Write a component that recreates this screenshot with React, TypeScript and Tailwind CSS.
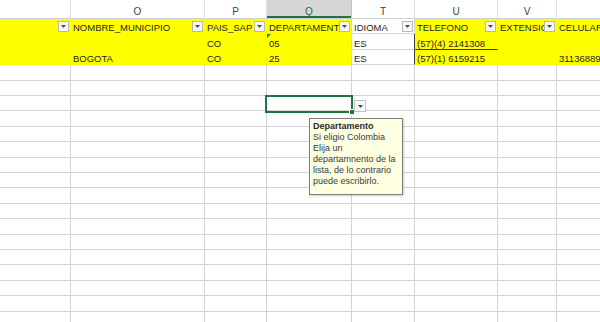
const font = { fontFamily: '"Liberation Sans", Arial, sans-serif' }

type Col = { letter: string; w: string }

const cols: Col[] = [
  { letter: '', w: 'w-[71px]' },
  { letter: 'O', w: 'w-[134px]' },
  { letter: 'P', w: 'w-[62px]' },
  { letter: 'Q', w: 'w-[85px]' },
  { letter: 'T', w: 'w-[63px]' },
  { letter: 'U', w: 'w-[83px]' },
  { letter: 'V', w: 'w-[59px]' },
  { letter: '', w: 'w-[60px]' },
]

const rowHeights = [
  'h-[15px]', 'h-[16px]', 'h-[15px]', 'h-[16px]', 'h-[15px]', 'h-[15px]', 'h-[16px]',
  'h-[15px]', 'h-[16px]', 'h-[15px]', 'h-[15px]', 'h-[16px]', 'h-[15px]', 'h-[16px]',
  'h-[15px]', 'h-[15px]', 'h-[16px]', 'h-[15px]', 'h-[16px]', 'h-[15px]',
]

type CellDef = { text?: string; filter?: boolean; cls?: string; marker?: boolean }

const Y = 'bg-[#ffff00] border-r border-b border-r-[#ffff00] border-b-[#ffff00]'
const W = 'bg-white border-r border-b border-r-[#d4d4d4] border-b-[#d4d4d4]'

const topRows: CellDef[][] = [
  [
    { filter: true, cls: Y },
    { text: 'NOMBRE_MUNICIPIO', filter: true, cls: Y },
    { text: 'PAIS_SAP', filter: true, cls: Y },
    { text: 'DEPARTAMENTO', filter: true, cls: 'bg-[#ffff00] border-r border-b border-r-[#d4d4d4] border-b-[#ffff00]' },
    { text: 'IDIOMA', filter: true, cls: W },
    { text: 'TELEFONO', filter: true, cls: Y },
    { text: 'EXTENSION', filter: true, cls: Y },
    { text: 'CELULAR', cls: Y },
  ],
  [
    { cls: Y },
    { cls: Y },
    { text: 'CO', cls: Y },
    { text: '05', marker: true, cls: 'bg-[#ffff00] border-r border-b border-r-[#d4d4d4] border-b-[#ffff00]' },
    { text: 'ES', cls: 'bg-white border-r border-b border-r-[#3a3a3a] border-b-[#d4d4d4]' },
    { text: '(57)(4) 2141308', cls: 'bg-[#ffff00] border-r border-b border-r-[#ffff00] border-b-[#3a3a3a]' },
    { cls: Y },
    { cls: Y },
  ],
  [
    { cls: Y },
    { text: 'BOGOTA', cls: Y },
    { text: 'CO', cls: Y },
    { text: '25', cls: 'bg-[#ffff00] border-r border-b border-r-[#d4d4d4] border-b-[#ffff00]' },
    { text: 'ES', cls: 'bg-white border-r border-b border-r-[#3a3a3a] border-b-[#d4d4d4]' },
    { text: '(57)(1) 6159215', cls: Y },
    { cls: Y },
    { text: '31136889', cls: Y },
  ],
]

const FilterButton = () => (
  <div className="w-[11px] h-[11px] shrink-0 mr-[1px] mb-[1px] border border-[#b9b9b9] bg-[#f6f6f6] flex items-center justify-center">
    <svg width="5" height="3" viewBox="0 0 5 3">
      <polygon points="0,0 5,0 2.5,3" fill="#4a4a4a" />
    </svg>
  </div>
)

export default function App() {
  return (
    <div
      className="relative w-[600px] h-[322px] overflow-hidden bg-white text-[9.5px] text-[#1e1e1e]"
      style={font}
    >
      {/* column letters */}
      <div className="flex h-[19px] border-b border-[#d0d0d0] bg-white">
        {cols.map((c, i) => (
          <div
            key={i}
            className={`${c.w} shrink-0 flex items-center justify-center pt-[5px] text-[10px] border-r ${
              c.letter === 'Q'
                ? 'bg-[#d6d6d6] text-[#1f6e41] border-r-[#c6c6c6] shadow-[inset_0_-2px_0_#217346]'
                : 'text-[#444] border-r-[#e1e1e1]'
            }`}
          >
            {c.letter}
          </div>
        ))}
      </div>

      {rowHeights.map((h, r) => {
        const defs = topRows[r]
        return (
          <div key={r} className={`flex ${h}`}>
            {cols.map((c, i) => {
              const d: CellDef = defs ? defs[i] : { cls: W }
              return (
                <div
                  key={i}
                  className={`${c.w} shrink-0 relative flex items-end ${d.cls}`}
                >
                  {d.marker && (
                    <div className="absolute left-0 top-0 w-0 h-0 border-t-[4px] border-r-[4px] border-t-[#1e7a44] border-r-transparent" />
                  )}
                  <span className="flex-1 min-w-0 overflow-hidden whitespace-nowrap pl-[2px] leading-[11px]">
                    {d.text}
                  </span>
                  {d.filter && <FilterButton />}
                </div>
              )
            })}
          </div>
        )
      })}

      {/* active cell */}
      <div className="absolute left-[265px] top-[95px] w-[88px] h-[18px] border-2 border-[#217346]" />
      <div className="absolute left-[349px] top-[109px] w-[6px] h-[6px] bg-[#217346] border border-white" />
      <div className="absolute left-[354px] top-[100px] w-[12px] h-[12px] border border-[#c3c3c3] bg-[#f8f8f8] flex items-center justify-center">
        <svg width="5" height="3" viewBox="0 0 5 3">
          <polygon points="0,0 5,0 2.5,3" fill="#4a4a4a" />
        </svg>
      </div>

      {/* input message */}
      <div className="absolute left-[309px] top-[118px] w-[94px] h-[77px] bg-[#ffffe1] border border-[#7d7d7d] shadow-[1px_1px_2px_rgba(0,0,0,0.2)] px-[3px] pt-[2px] text-[9px] leading-[11px] text-[#3b3b3b]">
        <div className="font-bold text-[#2a2a2a]">Departamento</div>
        <div>
          Si eligio Colombia
          <br />
          Elija un
          <br />
          departamnento de la
          <br />
          lista, de lo contrario
          <br />
          puede escribirlo.
        </div>
      </div>
    </div>
  )
}
